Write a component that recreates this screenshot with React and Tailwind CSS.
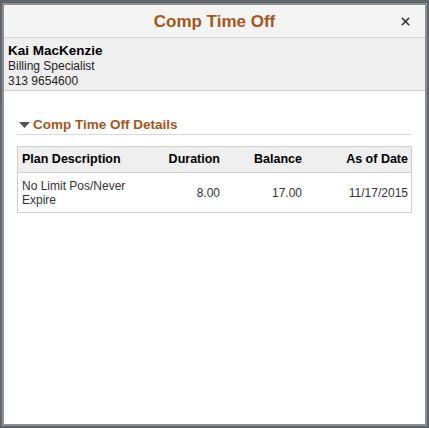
import { X } from "lucide-react";

const rows = [
  { plan: "No Limit Pos/Never Expire", duration: "8.00", balance: "17.00", asOf: "11/17/2015" },
];

export default function App() {
  return (
    <div className="w-[429px] h-[428px] bg-[#5f666d] pt-[3px] pl-[2px] pr-[2px] pb-[2px] flex font-['Liberation_Sans',Arial,sans-serif]">
      {/* Modal */}
      <div className="flex-1 flex flex-col bg-white border-2 border-[#8e8e8e]">
        {/* Header */}
        <div className="relative h-[33px] flex items-center justify-center bg-[#f4f4f4] border-b border-[#d6d6d6]">
          <h1 className="text-[17px] font-bold text-[#a4561b] leading-none">Comp Time Off</h1>
          <button className="absolute right-[13px] top-[10px] text-[#333]">
            <X size={13} strokeWidth={3} />
          </button>
        </div>

        {/* Employee */}
        <div className="h-[53px] bg-[#efefef] border-b border-[#cfcfcf] pl-[4px] pt-[4px] text-[#222]">
          <div className="text-[13.5px] font-bold leading-[17px] text-black">Kai MacKenzie</div>
          <div className="text-[12px] leading-[15px]">Billing Specialist</div>
          <div className="text-[12px] leading-[15px]">313 9654600</div>
        </div>

        {/* Body */}
        <div className="flex-1 px-[13px] pt-[25px]">
          <div className="flex items-center gap-[3px] pb-[1px] border-b border-[#d9d9d9]">
            <svg width="11" height="8" viewBox="0 0 11 8" className="ml-[2px]">
              <path d="M0 1 L11 1 L5.5 7 Z" fill="#555" />
            </svg>
            <span className="text-[13.5px] font-bold text-[#a4561b] leading-[17px]">Comp Time Off Details</span>
          </div>

          <div className="mt-[11px] border border-[#cdcdcd]">
            <div className="grid grid-cols-[140px_62px_82px_1fr] h-[26px] items-center bg-[#efefef] border-b border-[#cdcdcd] text-[12.5px] font-bold text-black">
              <div className="pl-[4px]">Plan Description</div>
              <div className="text-right">Duration</div>
              <div className="text-right">Balance</div>
              <div className="text-right pr-[3px]">As of Date</div>
            </div>
            {rows.map((r) => (
              <div key={r.plan} className="grid grid-cols-[140px_62px_82px_1fr] h-[39px] items-center text-[12px] text-[#333]">
                <div className="pl-[4px] leading-[14px] pr-[20px]">{r.plan}</div>
                <div className="text-right">{r.duration}</div>
                <div className="text-right">{r.balance}</div>
                <div className="text-right pr-[3px]">{r.asOf}</div>
              </div>
            ))}
          </div>
        </div>
      </div>
    </div>
  );
}
